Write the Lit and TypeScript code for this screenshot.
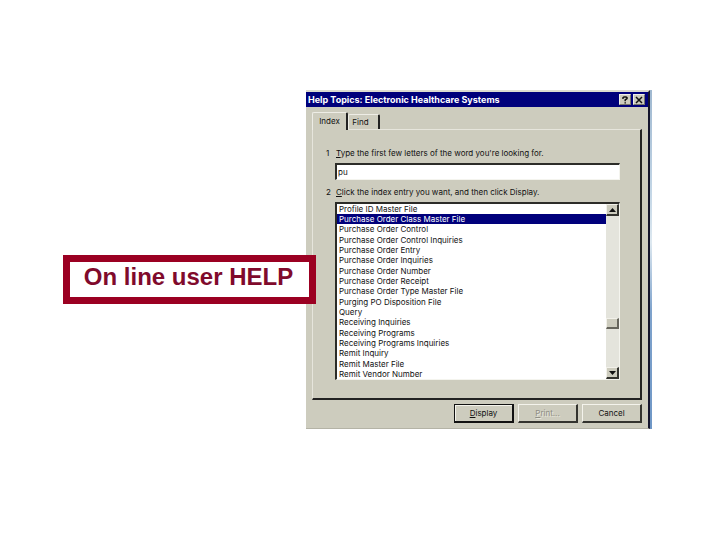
import { LitElement, html, css } from "lit";
import { customElement, state } from "lit/decorators.js";

const TOPICS = [
  "Profile ID Master File",
  "Purchase Order Class Master File",
  "Purchase Order Control",
  "Purchase Order Control Inquiries",
  "Purchase Order Entry",
  "Purchase Order Inquiries",
  "Purchase Order Number",
  "Purchase Order Receipt",
  "Purchase Order Type Master File",
  "Purging PO Disposition File",
  "Query",
  "Receiving Inquiries",
  "Receiving Programs",
  "Receiving Programs Inquiries",
  "Remit Inquiry",
  "Remit Master File",
  "Remit Vendor Number",
];

@customElement("help-topics")
export class HelpTopics extends LitElement {
  @state() private selected = TOPICS[1];

  static styles = css`
    :host {
      display: block;
      box-sizing: border-box;
      padding-right: 2px;
      background: linear-gradient(#9fb8d0, #c3d6e6 30%, #dde8f0 45%, #7fa3cc 65%, #6f97c6);
      color: #111;
      font: 8px/11px Inter, "Liberation Sans", sans-serif;
    }
    * { box-sizing: border-box; }
    .window {
      border-top: 2px solid #dcdbd0;
      border-right: 2px solid #14142c;
      border-bottom: 1px solid #b4b3a6;
      background: #cdccbe;
    }
    button, input, select {
      font: inherit;
      color: inherit;
      margin: 0;
      padding: 0;
      border-radius: 0;
      outline: none;
      appearance: none;
    }
    .title {
      display: flex;
      align-items: center;
      gap: 2px;
      height: 15px;
      padding: 0 3px 0 2px;
      background: #00007b;
      color: #fff;
    }
    .title h1 { flex: 1; margin: 0; font: bold 9px/15px Inter, "Liberation Sans", sans-serif; }
    .title button {
      display: grid;
      place-items: center;
      width: 12px;
      height: 11px;
      border: 1px solid #efeee6;
      border-right-color: #77766c;
      border-bottom-color: #77766c;
      background: #cdccbe;
    }
    svg { display: block; }
    .body { padding: 5px 6px 5px; }
    .tabs { display: flex; align-items: flex-end; height: 17px; }
    .tab {
      height: 15px;
      border: 1px solid #eeede6;
      border-right: 2px solid #222;
      border-bottom: 0;
      border-radius: 2px 2px 0 0;
      background: #cdccbe;
    }
    .tab.active { height: 18px; width: 36px; margin-bottom: -1px; z-index: 1; }
    .tab.other { width: 32px; padding-right: 6px; }
    .panel {
      padding: 18px 20px 18px 13px;
      border: 1px solid #e6e5dc;
      border-right: 2px solid #222;
      border-bottom: 2px solid #222;
    }
    .step { display: grid; grid-template-columns: 10px 1fr; height: 11px; }
    u { text-decoration-thickness: 1px; text-underline-offset: 1px; }
    .field, .list {
      margin-left: 9px;
      border: 1px solid #f4f4ee;
      border-top: 2px solid #2c2c28;
      border-left: 2px solid #2c2c28;
      background: #fff;
    }
    .field {
      display: block;
      width: calc(100% - 9px);
      height: 17px;
      margin-top: 4px;
      margin-bottom: 7px;
      padding-left: 1px;
    }
    .list { display: flex; margin-top: 4px; }
    select {
      flex: 1;
      min-width: 0;
      height: 175px;
      border: 0;
      background: #fff;
      overflow: hidden;
    }
    option {
      height: 10px;
      min-height: 10px;
      padding: 0 0 0 2px;
      line-height: 10px;
    }
    option:nth-child(3n) { height: 11px; min-height: 11px; }
    option:checked { background: #00007b linear-gradient(#00007b, #00007b); color: #fff; }
    .scroll {
      display: flex;
      flex-direction: column;
      width: 13px;
      background: #e4e4dc;
    }
    .scroll button, .thumb {
      display: grid;
      place-items: center;
      height: 12px;
      border: 1px solid #f2f1ea;
      border-right: 2px solid #33332e;
      border-bottom: 2px solid #33332e;
      background: #cdccbe;
    }
    .thumb { height: 11px; border-right-color: #66655c; border-bottom-color: #66655c; }
    .above { flex: 101; }
    .below { flex: 38; }
    .actions {
      display: flex;
      justify-content: flex-end;
      gap: 4px;
      margin-top: 4px;
    }
    .actions button {
      width: 60px;
      height: 19px;
      border: 1px solid #f4f3ec;
      border-right: 2px solid #33332e;
      border-bottom: 2px solid #33332e;
      background: #cdccbe;
    }
    .actions .default { border-color: #111; box-shadow: inset 1px 1px #f4f3ec; }
    .actions button:disabled { color: #8f8e84; text-shadow: 1px 1px #e8e7de; }
  `;

  private pick(e: Event) {
    this.selected = (e.target as HTMLSelectElement).value;
  }

  render() {
    return html`
      <div class="window">
        <header class="title">
          <h1>Help Topics: Electronic Healthcare Systems</h1>
          <button aria-label="Help">
            <svg width="8" height="8" viewBox="0 0 8 8" fill="none" stroke="#111" stroke-width="1.5">
              <path d="M2 3V1.6L3 .9h2l1 .8v1L4.2 4v1.3M4.2 6.2v1.4" />
            </svg>
          </button>
          <button aria-label="Close">
            <svg width="8" height="8" viewBox="0 0 8 8" stroke="#111" stroke-width="1.5">
              <path d="M1 1l6 6M7 1L1 7" />
            </svg>
          </button>
        </header>
        <div class="body">
          <div class="tabs" role="tablist">
            <button class="tab active" role="tab" aria-selected="true">Index</button>
            <button class="tab other" role="tab" aria-selected="false">Find</button>
          </div>
          <section class="panel" role="tabpanel">
            <label class="step" for="word">
              <span>1</span><span><u>T</u>ype the first few letters of the word you're looking for.</span>
            </label>
            <input class="field" id="word" type="text" value="pu" />
            <label class="step" for="topics">
              <span>2</span><span><u>C</u>lick the index entry you want, and then click Display.</span>
            </label>
            <div class="list">
              <select id="topics" size="17" @change=${this.pick}>
                ${TOPICS.map((t) => html`<option value=${t} ?selected=${t === this.selected}>${t}</option>`)}
              </select>
              <div class="scroll">
                <button aria-label="Scroll up">
                  <svg width="7" height="4" viewBox="0 0 7 4"><path d="M3.5 0L7 4H0z" fill="#111" /></svg>
                </button>
                <div class="above"></div>
                <div class="thumb"></div>
                <div class="below"></div>
                <button aria-label="Scroll down">
                  <svg width="7" height="4" viewBox="0 0 7 4"><path d="M0 0h7L3.5 4z" fill="#111" /></svg>
                </button>
              </div>
            </div>
          </section>
          <footer class="actions">
            <button class="default"><u>D</u>isplay</button>
            <button disabled><u>P</u>rint...</button>
            <button>Cancel</button>
          </footer>
        </div>
      </div>
    `;
  }
}

@customElement("app-root")
export class AppRoot extends LitElement {
  static styles = css`
    :host {
      display: block;
      box-sizing: border-box;
      min-height: 100vh;
      padding: 90px 68px 0 63px;
      background: #fff;
    }
    .slide { display: flex; align-items: flex-start; }
    .callout {
      box-sizing: border-box;
      flex: none;
      width: 253px;
      margin: 165px -10px 0 0;
      padding: 2px 2px 7px 0;
      border: 7px solid #9b0022;
      background: #fff;
      color: #800a2c;
      font: bold 24px/26px "Liberation Sans", Arial, sans-serif;
      text-align: center;
      z-index: 1;
    }
    help-topics { flex: 1; min-width: 0; }
  `;

  render() {
    return html`
      <main class="slide">
        <div class="callout">On line user HELP</div>
        <help-topics></help-topics>
      </main>
    `;
  }
}
